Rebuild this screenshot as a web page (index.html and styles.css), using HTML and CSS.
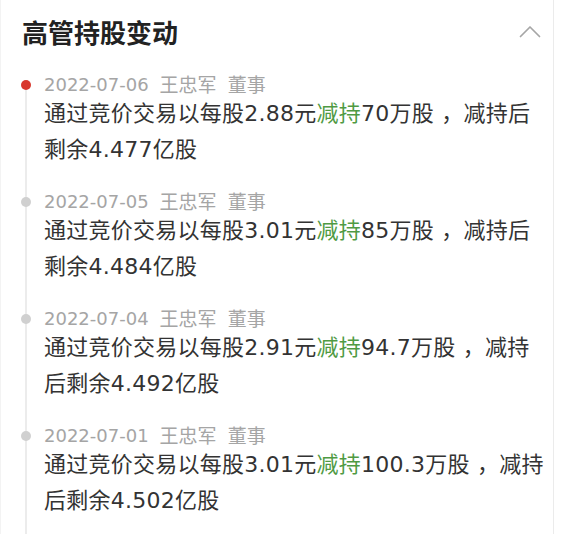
FILE: index.html
```html
<!DOCTYPE html>
<html lang="zh-CN">
<head>
<meta charset="utf-8">
<title>高管持股变动</title>
<link rel="stylesheet" href="styles.css">
</head>
<body>
<section class="card">
  <header class="head">
    <h2 class="title">高管持股变动</h2>
    <svg class="chevron" width="22" height="13" viewBox="0 0 22 13" aria-hidden="true">
      <polyline points="1.5,11.5 11,2 20.5,11.5" fill="none" stroke="#a6a6a6" stroke-width="1.7" stroke-linecap="round" stroke-linejoin="round"/>
    </svg>
  </header>
  <ul class="timeline">
    <li class="item first">
      <div class="meta"><span class="date">2022-07-06</span><span>王忠军</span><span>董事</span></div>
      <p class="desc">通过竞价交易以每股2.88元<span class="hl">减持</span>70万股 ，减持后剩余4.477亿股</p>
    </li>
    <li class="item">
      <div class="meta"><span class="date">2022-07-05</span><span>王忠军</span><span>董事</span></div>
      <p class="desc">通过竞价交易以每股3.01元<span class="hl">减持</span>85万股 ，减持后剩余4.484亿股</p>
    </li>
    <li class="item">
      <div class="meta"><span class="date">2022-07-04</span><span>王忠军</span><span>董事</span></div>
      <p class="desc">通过竞价交易以每股2.91元<span class="hl">减持</span>94.7万股 ，减持后剩余4.492亿股</p>
    </li>
    <li class="item">
      <div class="meta"><span class="date">2022-07-01</span><span>王忠军</span><span>董事</span></div>
      <p class="desc">通过竞价交易以每股3.01元<span class="hl">减持</span>100.3万股 ，减持后剩余4.502亿股</p>
    </li>
  </ul>
</section>
</body>
</html>
```
FILE: styles.css
```css
* { box-sizing: border-box; }
html, body {
  margin: 0;
  padding: 0;
  background: #fff;
}
body {
  font-family: "DejaVu Sans", "Noto Sans CJK SC", sans-serif;
  color: #333;
  overflow: hidden;
}
.card {
  width: 554px;
  min-height: 534px;
  border-left: 1px solid #f3f3f3;
  border-right: 1px solid #ebebeb;
  background: #fff;
}
.head {
  height: 63px;
  display: flex;
  align-items: center;
  justify-content: space-between;
  padding: 0 12px 0 21px;
}
.title {
  margin: 0;
  font-family: "Noto Sans CJK SC", sans-serif;
  font-size: 26px;
  font-weight: 700;
  color: #222;
  line-height: 30px;
}
.chevron { display: block; }
.timeline {
  list-style: none;
  margin: 0;
  padding: 11px 0 0 0;
}
.item {
  position: relative;
  padding: 0 8px 23px 43px;
}
.item::before {
  content: "";
  position: absolute;
  left: 24px;
  top: 0;
  bottom: 0;
  width: 2px;
  background: #ececec;
}
.item.first::before { top: 11px; }
.item::after {
  content: "";
  position: absolute;
  left: 20px;
  top: 6px;
  width: 10px;
  height: 10px;
  border-radius: 50%;
  background: #d0d0d0;
}
.item.first::after { background: #d8372d; }
.meta {
  display: flex;
  align-items: center;
  gap: 11px;
  height: 22px;
  font-size: 19px;
  line-height: 22px;
  color: #a5a5a5;
}
.date { font-size: 18px; }
.desc {
  margin: 0;
  font-size: 22px;
  line-height: 36px;
  letter-spacing: 0.25px;
  color: #333;
}
.hl { color: #4f9a43; }
```
